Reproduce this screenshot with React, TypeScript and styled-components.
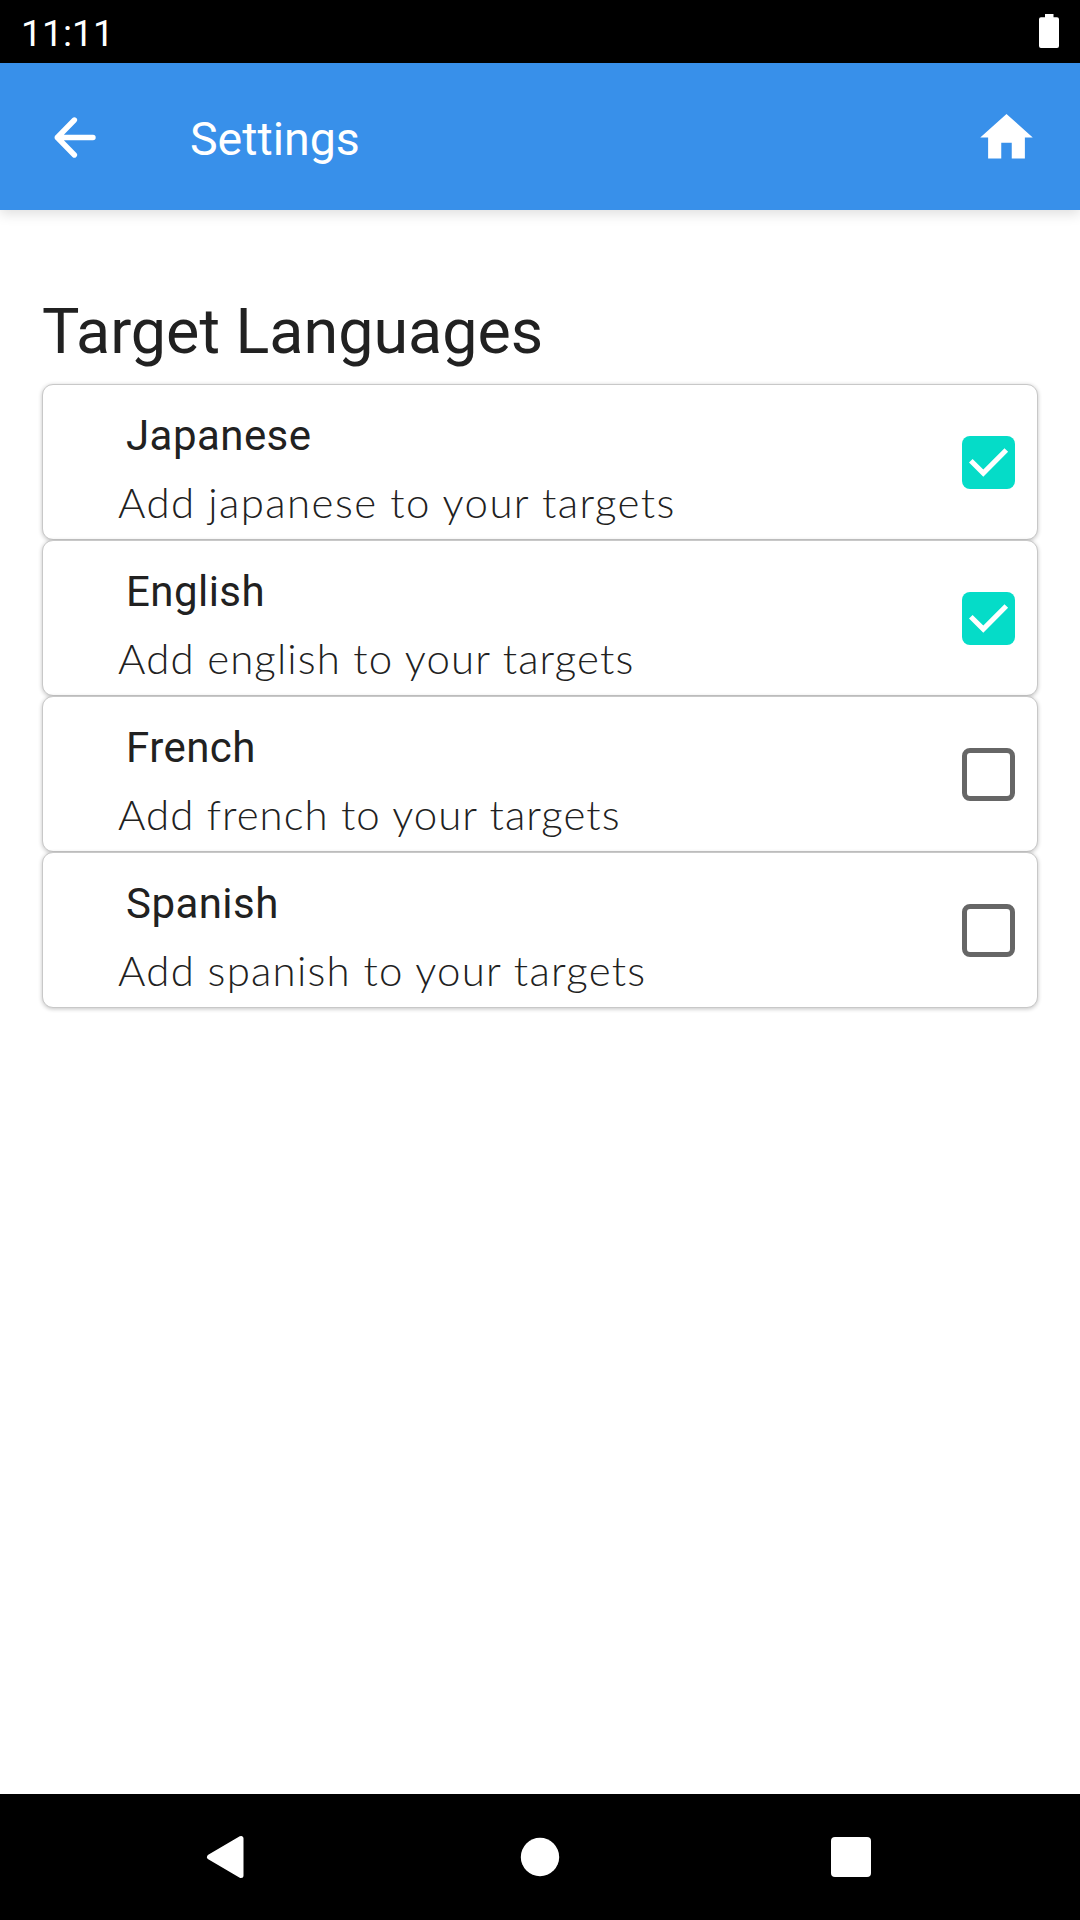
import React, { useState } from 'react';
import styled, { createGlobalStyle } from 'styled-components';

const GlobalStyle = createGlobalStyle`
  *, *::before, *::after { box-sizing: border-box; }
  body { margin: 0; background: #fff; }
`;

const Screen = styled.div`
  display: flex;
  flex-direction: column;
  width: 1080px;
  height: 1920px;
  overflow: hidden;
  background: #fff;
  color: #212121;
  font-family: Roboto, sans-serif;
`;

const StatusBar = styled.div`
  display: flex;
  align-items: flex-start;
  justify-content: space-between;
  height: 63px;
  padding: 14px 21px 0 21px;
  background: #000;
  color: #fff;
`;

const Clock = styled.span`
  font-size: 37.3px;
  line-height: 38px;
`;

const AppBar = styled.header`
  display: flex;
  align-items: center;
  height: 147px;
  padding: 1px 42px 0 42px;
  background: #3890ea;
  color: #fff;
  box-shadow: 0 4px 12px rgba(0, 0, 0, 0.13);
`;

const IconButton = styled.button`
  display: flex;
  padding: 0;
  border: 0;
  background: none;
  color: inherit;
`;

const AppTitle = styled.h1`
  flex: 1;
  margin: 3px 0 0 85px;
  font-size: 46.5px;
  font-weight: 400;
  line-height: 56px;
`;

const Content = styled.main`
  flex: 1;
  padding: 85px 42px 0;
`;

const SectionTitle = styled.h2`
  margin: 0 0 15px;
  font-size: 62.8px;
  font-weight: 400;
  line-height: 74px;
`;

const Card = styled.div`
  display: flex;
  align-items: center;
  justify-content: space-between;
  height: 156px;
  padding: 0 22px 0 75px;
  border: 1px solid #c8c8c8;
  border-radius: 11px;
  background: #fff;
  box-shadow: 0 1px 4px rgba(0, 0, 0, 0.24);
`;

const CardText = styled.div`
  display: flex;
  flex-direction: column;
  height: 100%;
  padding-top: 26px;
`;

const Language = styled.span`
  margin-left: 8px;
  font-size: 42px;
  line-height: 50px;
  letter-spacing: 0.45px;
`;

const Hint = styled.span<{ $tracking: number }>`
  margin-top: 15px;
  font-family: Lato, sans-serif;
  font-size: 42px;
  font-weight: 300;
  line-height: 52px;
  letter-spacing: ${(p) => p.$tracking}px;
  white-space: nowrap;
`;

const Checkbox = styled.button<{ $checked: boolean }>`
  display: flex;
  width: 53px;
  height: 53px;
  padding: 0;
  border: ${(p) => (p.$checked ? '0' : '5px solid #666')};
  border-radius: 8px;
  background: ${(p) => (p.$checked ? '#05dcc8' : '#fff')};
`;

const NavBar = styled.nav`
  display: flex;
  align-items: center;
  justify-content: space-between;
  height: 126px;
  padding: 0 209px 0 206px;
  background: #000;
  color: #fff;
`;

const languages = [
  { name: 'Japanese', hint: 'Add japanese to your targets', on: true, tracking: 1.4 },
  { name: 'English', hint: 'Add english to your targets', on: true, tracking: 1.1 },
  { name: 'French', hint: 'Add french to your targets', on: false, tracking: 1 },
  { name: 'Spanish', hint: 'Add spanish to your targets', on: false, tracking: 1.22 },
];

function LanguageRow({ item }: { item: (typeof languages)[number] }) {
  const [checked, setChecked] = useState(item.on);
  return (
    <Card>
      <CardText>
        <Language>{item.name}</Language>
        <Hint $tracking={item.tracking}>{item.hint}</Hint>
      </CardText>
      <Checkbox
        $checked={checked}
        role="checkbox"
        aria-checked={checked}
        onClick={() => setChecked(!checked)}
      >
        {checked && (
          <svg width="53" height="53" viewBox="0 0 53 53">
            <path d="M7 26.6 10.6 23 21.3 33.5 42.5 12.2 46.1 15.8 21.3 40.7Z" fill="#fff" />
          </svg>
        )}
      </Checkbox>
    </Card>
  );
}

export default function App() {
  return (
    <Screen>
      <GlobalStyle />
      <StatusBar>
        <Clock>11:11</Clock>
        <svg width="20" height="34" viewBox="0 0 20 34">
          <path
            d="M6 0h8.5v3.3H18a2 2 0 0 1 2 2V32a2 2 0 0 1-2 2H2a2 2 0 0 1-2-2V5.3a2 2 0 0 1 2-2h4z"
            fill="#fff"
          />
        </svg>
      </StatusBar>
      <AppBar>
        <IconButton aria-label="Back">
          <svg width="63" height="63" viewBox="0 0 63 63" fill="none" stroke="currentColor" strokeWidth="5.4" strokeLinecap="round" strokeLinejoin="round">
            <path d="M32.4 14 15.3 31.5 32.4 49M15.3 31.5H51" />
          </svg>
        </IconButton>
        <AppTitle>Settings</AppTitle>
        <IconButton aria-label="Home">
          <svg width="63" height="63" viewBox="0 0 24 24">
            <path d="M10 20v-6h4v6h5v-8h3L12 3 2 12h3v8z" fill="currentColor" />
          </svg>
        </IconButton>
      </AppBar>
      <Content>
        <SectionTitle>Target Languages</SectionTitle>
        {languages.map((item) => (
          <LanguageRow key={item.name} item={item} />
        ))}
      </Content>
      <NavBar>
        <IconButton aria-label="Back">
          <svg width="38" height="44" viewBox="0 0 38 44">
            <path d="M35 3.5V40.5L3.5 22Z" fill="currentColor" stroke="currentColor" strokeWidth="5" strokeLinejoin="round" />
          </svg>
        </IconButton>
        <IconButton aria-label="Home">
          <svg width="36" height="40" viewBox="0 0 36 40" overflow="visible">
            <circle cx="20" cy="20" r="19.2" fill="currentColor" />
          </svg>
        </IconButton>
        <IconButton aria-label="Recent apps">
          <svg width="40" height="40" viewBox="0 0 40 40">
            <rect width="40" height="40" rx="4" fill="currentColor" />
          </svg>
        </IconButton>
      </NavBar>
    </Screen>
  );
}
